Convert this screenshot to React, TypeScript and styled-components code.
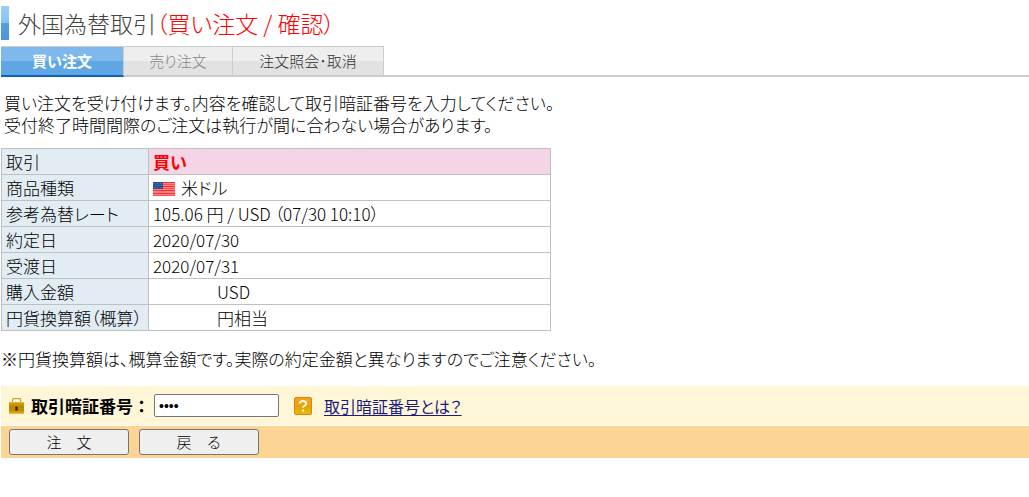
import React from "react";
import styled, { createGlobalStyle } from "styled-components";

const GlobalStyle = createGlobalStyle`
  *, *::before, *::after { box-sizing: border-box; }
  body {
    margin: 0;
    background: #fff;
    color: #000;
    font-family: "Noto Sans CJK JP", "Liberation Sans", sans-serif;
    font-feature-settings: "palt";
    font-size: 17px;
    font-weight: 300;
    line-height: 22px;
  }
`;

const Page = styled.main`
  padding: 6px 0 40px 1px;
`;

const Title = styled.h1`
  display: flex;
  align-items: center;
  margin: 0 0 6px;
  height: 34px;
  gap: 9px;
  font-size: 23px;
  line-height: 34px;
  font-weight: 300;
  color: #444;

  &::before {
    content: "";
    width: 8px;
    height: 34px;
    background: linear-gradient(#9bd0f8 0%, #86c3f3 50%, #559fe0 50%, #4a95d8 100%);
  }
`;

const TitleState = styled.span`
  color: #f00;
`;

const Tabs = styled.nav`
  display: flex;
  height: 31px;
  border-bottom: 2px solid #ccc;
`;

const Tab = styled.a<{ $width: number; $tone?: "active" | "muted" }>`
  width: ${(p) => p.$width}px;
  height: 31px;
  border: solid #ccc;
  border-width: 1px 1px 2px 0;
  font-size: 15px;
  line-height: 28px;
  text-align: center;
  text-decoration: none;
  color: ${(p) => (p.$tone === "active" ? "#fff" : p.$tone === "muted" ? "#888" : "#333")};
  font-weight: ${(p) => (p.$tone === "active" ? 700 : 300)};
  border-bottom-color: ${(p) => (p.$tone === "active" ? "#0b63b8" : "#ccc")};
  background: ${(p) =>
    p.$tone === "active"
      ? "linear-gradient(#7fb8ea 50%, #5fa6e4 50%)"
      : "linear-gradient(#eee 50%, #e2e2e2 50%)"};
`;

const Lead = styled.p`
  margin: 15px 0 12px;
  padding-left: 3px;
`;

const Details = styled.table`
  width: 550px;
  max-width: 100%;
  table-layout: fixed;
  border-collapse: collapse;
`;

const Label = styled.th`
  width: 147px;
  height: 26px;
  padding: 0 0 0 4px;
  border: 1px solid #c0c0c0;
  background: #e1ecf3;
  font-weight: 300;
  text-align: left;
`;

const Value = styled.td<{ $kind?: "side" | "amount" }>`
  height: 26px;
  padding: 0 0 0 ${(p) => (p.$kind === "amount" ? 68 : 4)}px;
  border: 1px solid #c0c0c0;
  background: ${(p) => (p.$kind === "side" ? "#f4d5e6" : "#fff")};
  color: ${(p) => (p.$kind === "side" ? "#f00" : "#000")};
  font-weight: ${(p) => (p.$kind === "side" ? 700 : 300)};
`;

const Currency = styled.span`
  display: flex;
  align-items: center;
  gap: 6px;

  svg { margin-top: 3px; }
`;

const Note = styled.p`
  margin: 17px 0 16px;
`;

const PinBar = styled.div`
  display: flex;
  align-items: center;
  height: 39px;
  margin-bottom: 1px;
  padding-left: 8px;
  background: #fef6d7;
`;

const PinLabel = styled.label`
  margin: 0 4px 0 7px;
  font-weight: 700;
  font-feature-settings: normal;
`;

const PinInput = styled.input`
  width: 125px;
  height: 23px;
  margin-right: 15px;
  padding: 0 4px;
  border: 1px solid #767676;
  border-radius: 2px;
  background: #fff;
  font: 14px "Liberation Sans", sans-serif;
`;

const HelpLink = styled.a`
  margin-left: 12px;
  color: #1a1a80;
  font-size: 16px;
  font-weight: 400;
  text-decoration: underline;
  text-underline-offset: 2px;
`;

const ActionBar = styled.div`
  display: flex;
  align-items: center;
  gap: 10px;
  height: 32px;
  padding-left: 8px;
  background: #fcd594;
`;

const Button = styled.button`
  width: 120px;
  height: 26px;
  padding: 0;
  border: 1px solid #767676;
  border-radius: 3px;
  background: #efefef;
  color: #000;
  font-family: inherit;
  font-size: 15px;
  font-weight: 300;
  line-height: 22px;
`;

const Flag = () => (
  <svg width="22" height="14" viewBox="0 0 22 14" aria-hidden="true" shapeRendering="crispEdges">
    <rect width="22" height="14" fill="#ff8484" />
    <path d="M0 0h22v1H0zM0 4h22v1H0zM0 8h22v1H0zM0 11h22v1H0z" fill="#fa2c30" />
    <path d="M0 2h22v1H0zM0 6h22v1H0zM0 13h22v1H0z" fill="#ff5054" />
    <rect width="10" height="7" fill="#28529c" />
    <path d="M1 1h1v1H1zM4 1h1v1H4zM7 1h1v1H7zM2 3h1v1H2zM5 3h1v1H5zM8 3h1v1H8zM1 5h1v1H1zM4 5h1v1H4zM7 5h1v1H7z" fill="#4f72b0" />
  </svg>
);

const LockIcon = () => (
  <svg width="15" height="16" viewBox="0 0 15 16" aria-hidden="true">
    <defs>
      <linearGradient id="lockBody" x1="0" y1="0" x2="0" y2="1">
        <stop offset="0" stopColor="#d7a316" />
        <stop offset=".4" stopColor="#bd8600" />
        <stop offset=".75" stopColor="#c48d05" />
        <stop offset="1" stopColor="#edc637" />
      </linearGradient>
    </defs>
    <path d="M3.5 5V1.5Q3.5 .7 4.3 .7h6.4q.8 0 .8 .8V5" fill="none" stroke="#c79f45" strokeWidth="1.2" />
    <rect y="4" width="15" height="12" fill="url(#lockBody)" />
    <path d="M0 4h15v1H0z" fill="#e2b52e" />
    <path d="M7.5 8.5a1.3 1.3 0 0 1 .9 2.3l.8 1.7H5.8l.8-1.7a1.3 1.3 0 0 1 .9-2.3z" fill="#3d2600" />
  </svg>
);

const HelpIcon = () => (
  <svg width="18" height="18" viewBox="0 0 18 18" aria-hidden="true">
    <defs>
      <linearGradient id="helpFace" x1="0" y1="0" x2="0" y2="1">
        <stop offset="0" stopColor="#f0a31c" />
        <stop offset=".45" stopColor="#e9a51c" />
        <stop offset=".55" stopColor="#dba500" />
        <stop offset="1" stopColor="#e8bd10" />
      </linearGradient>
    </defs>
    <rect x=".5" y=".5" width="17" height="17" rx="1.5" fill="url(#helpFace)" stroke="#e2820c" />
    <path d="M5.8 6.6Q5.8 4 9 4t3.2 2.6c0 2.2-3.2 2.2-3.2 4.2" fill="none" stroke="#fff8dc" strokeWidth="1.8" />
    <rect x="8" y="12.5" width="2" height="2" fill="#fff8dc" />
  </svg>
);

export default function App() {
  return (
    <>
      <GlobalStyle />
      <Page>
        <Title>
          <span>
            外国為替取引<TitleState>（買い注文 / 確認）</TitleState>
          </span>
        </Title>
        <Tabs>
          <Tab href="#buy" $width={123} $tone="active">買い注文</Tab>
          <Tab href="#sell" $width={109} $tone="muted">売り注文</Tab>
          <Tab href="#orders" $width={151}>注文照会･取消</Tab>
        </Tabs>
        <Lead>
          買い注文を受け付けます。内容を確認して取引暗証番号を入力してください。
          <br />
          受付終了時間間際のご注文は執行が間に合わない場合があります。
        </Lead>
        <Details>
          <tbody>
            <tr>
              <Label scope="row">取引</Label>
              <Value $kind="side">買い</Value>
            </tr>
            <tr>
              <Label scope="row">商品種類</Label>
              <Value>
                <Currency><Flag />米ドル</Currency>
              </Value>
            </tr>
            <tr>
              <Label scope="row">参考為替レート</Label>
              <Value>105.06 円 / USD （07/30 10:10）</Value>
            </tr>
            <tr>
              <Label scope="row">約定日</Label>
              <Value>2020/07/30</Value>
            </tr>
            <tr>
              <Label scope="row">受渡日</Label>
              <Value>2020/07/31</Value>
            </tr>
            <tr>
              <Label scope="row">購入金額</Label>
              <Value $kind="amount">USD</Value>
            </tr>
            <tr>
              <Label scope="row">円貨換算額（概算）</Label>
              <Value $kind="amount">円相当</Value>
            </tr>
          </tbody>
        </Details>
        <Note>※円貨換算額は、概算金額です。実際の約定金額と異なりますのでご注意ください。</Note>
        <form onSubmit={(e) => e.preventDefault()}>
          <PinBar>
            <LockIcon />
            <PinLabel htmlFor="pin">取引暗証番号：</PinLabel>
            <PinInput id="pin" type="password" defaultValue="0000" />
            <HelpIcon />
            <HelpLink href="#pin-help">取引暗証番号とは？</HelpLink>
          </PinBar>
          <ActionBar>
            <Button type="submit">注　文</Button>
            <Button type="button">戻　る</Button>
          </ActionBar>
        </form>
      </Page>
    </>
  );
}
